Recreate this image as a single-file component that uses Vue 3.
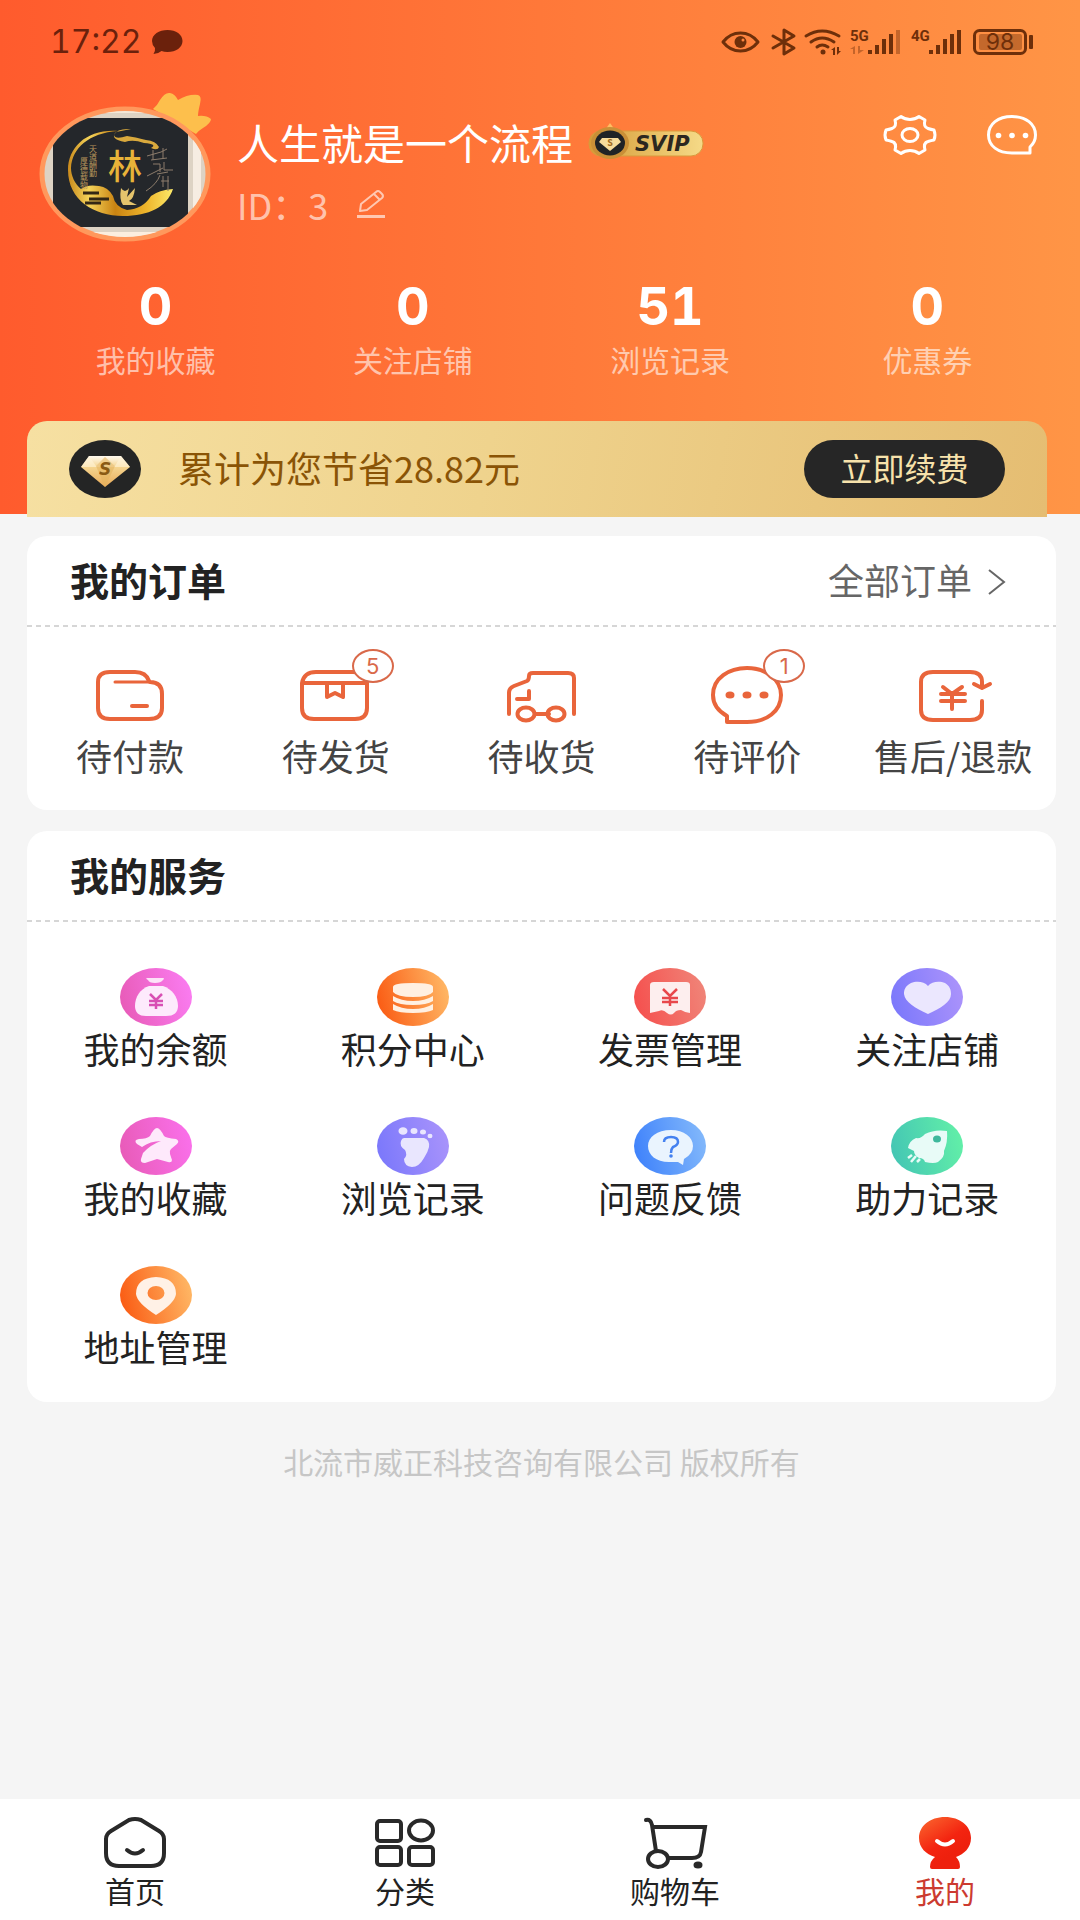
<script setup>
const stats = [
  { value: '0', label: '我的收藏' },
  { value: '0', label: '关注店铺' },
  { value: '51', label: '浏览记录' },
  { value: '0', label: '优惠券' },
]

const orders = [
  { icon: 'wallet', label: '待付款' },
  { icon: 'box', label: '待发货', badge: 5 },
  { icon: 'truck', label: '待收货' },
  { icon: 'comment', label: '待评价', badge: 1 },
  { icon: 'refund', label: '售后/退款' },
]

const services = [
  { icon: 'balance', label: '我的余额', from: '#e85bb8', to: '#fa7cf0' },
  { icon: 'points', label: '积分中心', from: '#fa5c14', to: '#ffb765' },
  { icon: 'invoice', label: '发票管理', from: '#f5504e', to: '#f08478' },
  { icon: 'heart', label: '关注店铺', from: '#7b78fb', to: '#ab93fb' },
  { icon: 'star', label: '我的收藏', from: '#e85bb8', to: '#fa70ea' },
  { icon: 'foot', label: '浏览记录', from: '#7b78fb', to: '#a893fb' },
  { icon: 'question', label: '问题反馈', from: '#3f82fb', to: '#82b8fb' },
  { icon: 'rocket', label: '助力记录', from: '#44c6b4', to: '#62efa8' },
  { icon: 'pin', label: '地址管理', from: '#fa5c14', to: '#ffb765' },
]

const tabs = [
  { icon: 'home', label: '首页' },
  { icon: 'grid', label: '分类' },
  { icon: 'cart', label: '购物车' },
  { icon: 'mine', label: '我的', active: true },
]
</script>

<template>
  <div class="page">
    <header class="header">
      <div class="status">
        <span class="clock">17:22</span>
        <svg class="status-chat" width="31" height="26" viewBox="0 0 31 26">
          <path d="M15.500 1C24 1 30.500 5.500 30.500 12S24 23 15.500 23Q12 23 9.500 22Q6 25 1.500 25Q3.500 22 3 19Q0 16 0 12C0 5.500 7 1 15.500 1Z" fill="#6b210c" />
        </svg>
        <svg class="status-icons" width="314" height="28" viewBox="0 0 314 28">
          <g fill="none" stroke="#6e2f0a" stroke-width="3" stroke-linejoin="round" stroke-linecap="round">
            <path d="M2 14Q9 5 19.500 5T37 14Q30 23 19.500 23T2 14Z" />
            <circle cx="19.500" cy="14" r="6" fill="#6e2f0a" stroke="none" />
            <circle cx="22" cy="12" r="1.500" fill="#ff8640" stroke="none" />
            <path d="M52 8L73 20L63 26V2L73 8L52 20" />
            <path d="M85 8Q101 -2 118 8" />
            <path d="M90 14Q101 6 113 14" />
            <path d="M96 19Q101 15 107 19" />
          </g>
          <g fill="#6e2f0a">
            <circle cx="102" cy="24" r="2.500" />
            <path d="M114 19V27H112V22H110ZM116 19V27L120 23H118V19Z" />
            <rect x="147" y="22" width="4" height="4" />
            <rect x="154" y="17" width="4" height="9" />
            <rect x="161" y="11" width="4" height="15" />
            <rect x="168" y="6" width="4" height="20" />
            <rect x="208" y="22" width="4" height="4" />
            <rect x="215" y="17" width="4" height="9" />
            <rect x="222" y="11" width="4" height="15" />
            <rect x="229" y="6" width="4" height="20" />
            <rect x="236" y="2" width="4" height="24" />
            <rect x="308" y="7" width="4" height="14" rx="1" />
            <g opacity=".4">
              <rect x="175" y="2" width="4" height="24" />
              <path d="M134 18V26H132V21H129ZM137 18V26L143 22H139V18Z" />
              <rect x="258" y="6" width="43" height="16" rx="2" />
            </g>
          </g>
          <rect x="253.500" y="2.500" width="51" height="23" rx="5" fill="none" stroke="#6e2f0a" stroke-width="3" />
          <g fill="#6e2f0a" font-family="Roboto, sans-serif">
            <text x="129" y="13" font-size="15" font-weight="700">5G</text>
            <text x="190" y="13" font-size="15" font-weight="700">4G</text>
            <text x="279" y="22" font-size="23" text-anchor="middle" font-family="Inter, sans-serif">98</text>
          </g>
        </svg>
      </div>

      <div class="profile">
        <svg class="avatar" width="172" height="150" viewBox="0 0 172 150">
          <defs>
            <clipPath id="avatar-clip"><ellipse cx="86" cy="82" rx="81" ry="63" /></clipPath>
            <linearGradient id="avatar-gold" x1="0" x2="1" y1="0" y2="0">
              <stop offset="0" stop-color="#c98a1c" />
              <stop offset=".2" stop-color="#f4d35a" />
              <stop offset=".45" stop-color="#c98312" />
              <stop offset=".75" stop-color="#efb62c" />
              <stop offset="1" stop-color="#fbe96a" />
            </linearGradient>
          </defs>
          <path d="M114 17Q118 14 121 8Q126 0 131 1Q136 2 139 8Q149 2 159 3Q163 4 161 12Q159 20 159 24Q167 23 172 27Q172 31 164 36Q159 39 157 42Z" fill="#fdbf4c" />
          <ellipse cx="86" cy="82" rx="83" ry="65" fill="#ddd3c4" stroke="#ff985c" stroke-width="5" />
          <g clip-path="url(#avatar-clip)">
            <rect x="0" y="14" width="172" height="7" fill="#f3e7d6" />
            <rect x="0" y="140" width="172" height="8" fill="#fbeede" />
            <rect x="154" y="20" width="8" height="122" fill="#f6ede2" />
            <rect x="14" y="26" width="135" height="109" fill="#24272b" />
            <path d="M79 39C48 37 29 55 29 78C29 108 55 124 84 124C110 124 128 115 134 97Q120 98 112 104Q104 117 88 118Q76 115 74 104Q69 95 60 94Q48 92 42 97C36 92 32 84 32 76C33 56 50 41 79 39Z" fill="url(#avatar-gold)" />
            <path d="M44 101H60M50 107H70M46 111H62" stroke="#332715" stroke-width="3" />
            <path d="M92 37Q78 36 75 43Q76 48 88 44Q96 45 107 48Q117 49 120 55Q119 59 112 56Q119 52 105 51Q94 47 86 50Q70 47 77 40Z" fill="#d9a93d" />
            <path d="M82 96Q86 102 90 96L88 105L96 96Q95 107 90 109L98 113H84Q80 108 82 96Z" fill="#e5c46c" />
            <text x="86" y="87" font-size="34" text-anchor="middle" fill="#e8b339" font-weight="500">林</text>
            <g fill="#b9975c" font-size="8" text-anchor="middle">
              <text x="54" y="60">天</text><text x="54" y="68">道</text><text x="54" y="76">酬</text><text x="54" y="84">勤</text>
              <text x="45" y="72">厚</text><text x="45" y="80">德</text><text x="45" y="88">载</text><text x="45" y="96">物</text>
            </g>
            <path d="M108 64L122 60L128 57M114 58V68M124 56V66M112 68L128 66M114 72H121V80M125 70V78H134M108 84L124 76M118 82L129 80M121 83Q118 92 107 99M124 84V95M129 84V99M122 89H130" fill="none" stroke="#8d7d6c" stroke-width="1" />
          </g>
        </svg>

        <div class="who">
          <div class="name-row">
            <span class="name">人生就是一个流程</span>
            <svg width="116" height="38" viewBox="0 0 116 38">
              <defs>
                <linearGradient id="svip-bg" x1="0" x2="1" y1="0" y2="0">
                  <stop offset="0" stop-color="#d69b36" /><stop offset="1" stop-color="#f5da88" />
                </linearGradient>
              </defs>
              <rect x="1" y="8" width="114" height="25" rx="12" fill="url(#svip-bg)" stroke="#d99a3c" />
              <path d="M22 0L27 7H17Z" fill="#ffbd63" />
              <ellipse cx="22" cy="20" rx="19" ry="16" fill="#c98f37" />
              <ellipse cx="22" cy="20" rx="15" ry="12.500" fill="#202326" />
              <path d="M14 15H30L33 19L22 28L11 19Z" fill="#f7dc9b" />
              <text x="22" y="23" font-size="9" font-weight="700" text-anchor="middle" fill="#a06a1d">S</text>
              <text x="47" y="28" font-size="21" font-weight="700" font-style="italic" font-family="DejaVu Sans, sans-serif" fill="#2b2720">SVIP</text>
            </svg>
          </div>
          <div class="id-row">
            <span>ID：3</span>
            <button type="button" class="icon-btn" aria-label="编辑">
              <svg width="30" height="28" viewBox="0 0 30 28" fill="none" stroke="currentColor" stroke-width="3" stroke-linejoin="round">
                <path d="M1 26.500H29" />
                <path d="M4 21L5 14L20 2Q22 0 24 2L26 4Q28 6 26 8L11 20ZM18 4L24 10" stroke-width="2" />
              </svg>
            </button>
          </div>
        </div>

        <div class="actions">
          <button type="button" class="icon-btn" aria-label="设置">
            <svg width="52" height="40" viewBox="0 0 52 40" fill="none" stroke="currentColor" stroke-width="3" stroke-linejoin="round">
              <path d="M17 1.500Q21 4.500 26 4.500T35 1.500L41 5Q39 12 44 13.500Q47 14.500 50 15Q52 20 50 25Q47 25.500 44 26.500Q39 28 41 35L35 38.500Q31 35.500 26 35.500T17 38.500L11 35Q13 28 8 26.500Q5 25.500 2 25Q0 20 2 15Q5 14.500 8 13.500Q13 12 11 5Z" />
              <ellipse cx="26" cy="20" rx="8" ry="6.500" />
            </svg>
          </button>
          <button type="button" class="icon-btn" aria-label="消息">
            <svg width="50" height="40" viewBox="0 0 50 40" fill="none" stroke="currentColor" stroke-width="3" stroke-linejoin="round">
              <path d="M43 38H25C11 38 1.500 31 1.500 20S11 1.500 25 1.500S48.500 9 48.500 20Q48.500 27 43 32Z" />
              <g fill="currentColor" stroke="none"><circle cx="11.500" cy="20.500" r="2.800" /><circle cx="25" cy="20.500" r="2.800" /><circle cx="38.500" cy="20.500" r="2.800" /></g>
            </svg>
          </button>
        </div>
      </div>

      <ul class="stats">
        <li v-for="s in stats" :key="s.label">
          <strong>{{ s.value }}</strong>
          <span>{{ s.label }}</span>
        </li>
      </ul>

      <div class="vip">
        <svg width="72" height="58" viewBox="0 0 72 58">
          <defs>
            <linearGradient id="vip-gem" x1="0" x2="0" y1="0" y2="1">
              <stop offset="0" stop-color="#fffaf0" /><stop offset=".35" stop-color="#f5d590" /><stop offset="1" stop-color="#e9ab58" />
            </linearGradient>
          </defs>
          <ellipse cx="36" cy="29" rx="36" ry="29" fill="#242525" />
          <path d="M20 16H52L61 27L36 47L12 27Z" fill="url(#vip-gem)" />
          <path d="M20 16L27 26L36 17L46 26L52 16L61 27H12Z" fill="#fff3d6" opacity=".65" />
          <path d="M27 26L36 17L46 26L36 47Z" fill="#e5b45f" opacity=".6" />
          <text x="36" y="35" font-size="17" font-weight="700" font-style="italic" font-family="DejaVu Sans, sans-serif" text-anchor="middle" fill="#8a5a14">S</text>
        </svg>
        <span class="vip-text">累计为您节省28.82元</span>
        <button type="button" class="renew">立即续费</button>
      </div>
    </header>

    <main class="main">
      <section class="card">
        <div class="card-head">
          <h2>我的订单</h2>
          <a href="#" class="more">
            <span>全部订单</span>
            <svg width="18" height="28" viewBox="0 0 18 28" fill="none" stroke="currentColor" stroke-width="2">
              <path d="M1 3L16 15L1 27" />
            </svg>
          </a>
        </div>
        <div class="orders">
          <a v-for="o in orders" :key="o.label" href="#" class="order">
            <span class="order-icon">
              <svg width="72" height="60" viewBox="0 0 72 60" fill="none" stroke="#e9653b" stroke-width="4" stroke-linejoin="round" stroke-linecap="round">
                <template v-if="o.icon === 'wallet'">
                  <path d="M55 16Q52 7 41 7H16Q4 7 4 17V43Q4 54 16 54H55Q68 54 68 43V29Q68 17 56 17" />
                  <path d="M21 17H56" stroke-width="3" />
                  <path d="M38 41H53" />
                </template>
                <template v-else-if="o.icon === 'box'">
                  <path d="M2 18V43Q2 54 14 54H55Q67 54 67 43V18Q65 7 53 7H16Q4 7 2 18H67" />
                  <path d="M27 18V32L35 28L43 32V18" stroke-linecap="butt" />
                </template>
                <template v-else-if="o.icon === 'truck'">
                  <path d="M4 49V28Q4 23 9 21L22 16Q24 15 24 11Q24 8 28 8H63Q69 8 69 13V49" />
                  <path d="M12 34H24V26M31 49H44" />
                  <ellipse cx="21" cy="49" rx="8.500" ry="6.500" /><ellipse cx="51" cy="49" rx="8.500" ry="6.500" />
                </template>
                <template v-else-if="o.icon === 'comment'">
                  <path d="M16 57V51C7 46 2 39 2 30C2 13 18 3 36 3S70 14 70 30S56 57 36 57Z" />
                  <g fill="#e9653b" stroke="none"><ellipse cx="19" cy="30" rx="4.500" ry="3.500" /><ellipse cx="36" cy="30" rx="4.500" ry="3.500" /><ellipse cx="53" cy="30" rx="4.500" ry="3.500" /></g>
                </template>
                <template v-else>
                  <path d="M65 22V17Q65 7 53 7H16Q4 7 4 17V45Q4 55 16 55H53Q65 55 65 45V36" />
                  <path d="M57 19L65 23L73 19M26 22L35 29L45 22M24 29H48M24 36H48M35 29V44" />
                </template>
              </svg>
              <span v-if="o.badge" class="badge">{{ o.badge }}</span>
            </span>
            <span class="order-label">{{ o.label }}</span>
          </a>
        </div>
      </section>

      <section class="card">
        <div class="card-head">
          <h2>我的服务</h2>
        </div>
        <div class="services">
          <a v-for="s in services" :key="s.icon" href="#" class="service">
            <svg width="72" height="58" viewBox="0 0 72 58">
              <defs>
                <linearGradient :id="'bg-' + s.icon" x1="0" x2="1" y1=".6" y2=".4">
                  <stop offset="0" :stop-color="s.from" /><stop offset="1" :stop-color="s.to" />
                </linearGradient>
              </defs>
              <ellipse cx="36" cy="29" rx="36" ry="29" :fill="`url(#bg-${s.icon})`" />
              <template v-if="s.icon === 'balance'">
                <path d="M27 10H43Q45 10 43 12Q41 15 35 15T28 12Q25 10 27 10Z" fill="#fde3f8" />
                <path d="M29 18H43C52 21 58 29 58 38Q58 48 46 48H26Q15 48 15 38C15 29 20 21 29 18Z" fill="#fdeafc" />
                <path d="M30 26L36 32L42 26M29 33H43M29 37H43M36 32V41" fill="none" stroke="#d850b4" stroke-width="2.500" />
              </template>
              <template v-else-if="s.icon === 'points'">
                <path d="M16 19Q16 15 36 15T56 19V24Q52 29 36 29T16 24Z" fill="#fff0e2" />
                <path d="M16 28Q24 33 36 33T56 28V33Q50 37 36 37T16 33ZM16 36Q24 41 36 41T56 36V42Q50 45 36 45T16 42Z" fill="#fff0e2" />
              </template>
              <template v-else-if="s.icon === 'invoice'">
                <path d="M20 14H52Q56 14 56 17V45Q52 45 47 42Q42 42 40 45Q37 48 33 45Q29 41 25 43L16 45V17Q16 14 20 14Z" fill="#fdeeee" />
                <path d="M29 21L36 28L43 21M28 30H44M28 34H44M36 28V38" fill="none" stroke="#e8474b" stroke-width="2.500" />
              </template>
              <path v-else-if="s.icon === 'heart'" d="M37 18C33 13 25 13 20 15C14 18 13 22 13 26C14 34 24 40 37 46C50 40 60 34 60 26C60 22 59 18 54 15C49 13 41 13 37 18Z" fill="#ebe7fe" />
              <path v-else-if="s.icon === 'star'" d="M37 11Q40 11 44 19Q46 21 56 22Q60 24 57 27L51 32Q49 34 50 37L52 43Q52 46 48 45L37 42L25 46Q20 46 21 42L23 36Q30 28 41 24Q30 24 22 30L17 27Q13 23 19 22Q27 22 30 19Q34 11 37 11Z" fill="#fee9fb" />
              <g v-else-if="s.icon === 'foot'" fill="#e9e6fe">
                <ellipse cx="26" cy="14" rx="4.500" ry="3.800" /><ellipse cx="37" cy="14" rx="3.500" ry="3" /><ellipse cx="46" cy="15" rx="3" ry="2.500" /><ellipse cx="53" cy="19" rx="2.500" ry="2.300" />
                <path d="M27 21H47Q53 23 52 30Q51 35 47 41Q42 50 35 50Q27 49 27 42Q31 38 28 33Q22 29 24 24Q25 21 27 21Z" />
              </g>
              <template v-else-if="s.icon === 'question'">
                <path d="M37 13C50 13 59 20 59 29Q59 37 50 42L49 48L44 45H35C22 45 14 38 14 29S23 13 37 13Z" fill="#eaf4fe" />
                <path d="M30 25Q30 20 37 20T44 25Q44 28 39 30Q37 32 37 36" fill="none" stroke="#4481f0" stroke-width="2.500" />
                <circle cx="37" cy="39" r="1.800" fill="#4481f0" />
              </template>
              <template v-else-if="s.icon === 'rocket'">
                <path d="M34 17Q44 12 56 14Q57 25 53 34Q54 40 47 45Q43 47 34 45Q33 41 28 41Q23 38 23 34L17 31Q18 24 25 21Q30 22 34 17Z" fill="#e8fbf7" />
                <ellipse cx="46" cy="22" rx="4" ry="3.500" fill="#3eb89c" />
                <path d="M21 38L17 41M25 39L20 45M29 42L26 45" stroke="#e8fbf7" stroke-width="2.500" />
              </template>
              <path v-else fill-rule="evenodd" d="M36 11Q56 12 56 28Q55 37 36 49Q17 37 16 28Q16 12 36 11ZM36 20A8.500 7 0 1 0 36 34A8.500 7 0 1 0 36 20Z" fill="#fff1e6" />
            </svg>
            <span>{{ s.label }}</span>
          </a>
        </div>
      </section>

      <p class="copyright">北流市威正科技咨询有限公司 版权所有</p>
    </main>

    <nav class="tabs">
      <a v-for="t in tabs" :key="t.icon" href="#" class="tab" :class="{ active: t.active }">
        <svg width="64" height="54" viewBox="0 0 64 54" fill="none" stroke="#292929" stroke-width="4" stroke-linecap="round" stroke-linejoin="round">
          <template v-if="t.icon === 'home'">
            <path d="M26 4Q32 2 38 4L56 15Q61 18 61 23V37Q61 50 48 50H16Q3 50 3 37V23Q3 18 8 15Z" />
            <path d="M24 34Q32 41 40 34" />
          </template>
          <template v-else-if="t.icon === 'grid'">
            <rect x="4" y="5" width="24" height="20" rx="3" /><ellipse cx="48" cy="14.500" rx="12" ry="10" />
            <rect x="4" y="31" width="24" height="18" rx="3" /><rect x="36" y="31" width="24" height="18" rx="3" />
          </template>
          <template v-else-if="t.icon === 'cart'">
            <path d="M3 4Q8 3 9 9L13 35M10 11H62L58 36Q57 42 49 42H26" stroke-linejoin="miter" />
            <ellipse cx="15" cy="43" rx="10" ry="8" /><ellipse cx="55" cy="49" rx="4.500" ry="3.500" fill="#292929" stroke="none" />
          </template>
          <template v-else>
            <defs>
              <linearGradient id="mine-bg" x1="0" x2=".5" y1="0" y2=".8">
                <stop offset="0" stop-color="#fb6a30" /><stop offset=".7" stop-color="#f32410" /><stop offset="1" stop-color="#ee200d" />
              </linearGradient>
            </defs>
            <path d="M32 1C47 1 58 10 58 22C58 32 51 38 43 41Q47 45 47 51Q47 53 45 53H19Q17 53 17 51Q17 45 22 41C13 38 6 32 6 22C6 10 17 1 32 1Z" fill="url(#mine-bg)" stroke="none" />
            <path d="M24 25Q32 32 40 25" stroke="#fff" />
          </template>
        </svg>
        <span>{{ t.label }}</span>
      </a>
    </nav>
  </div>
</template>

<style>
body {
  margin: 0;
  background: #f5f5f5;
}
</style>

<style scoped>
.page {
  min-height: 100vh;
  display: flex;
  flex-direction: column;
  background: #f5f5f5;
  color: #222;
  font-family: "Noto Sans CJK SC", sans-serif;
  font-size: 36px;
}
.page svg {
  display: block;
  flex: none;
  overflow: visible;
}
a {
  color: inherit;
  text-decoration: none;
}
button {
  font: inherit;
  border: 0;
  padding: 0;
  cursor: pointer;
}
.icon-btn {
  background: none;
  color: inherit;
}
.header {
  background: linear-gradient(90deg, #ff5b2d, #ff7839 50%, #ff9546);
  color: #fff;
}
.status {
  display: flex;
  align-items: center;
  height: 28px;
  padding: 28px 45px 0 50px;
}
.clock {
  font-family: Inter, sans-serif;
  font-size: 32px;
  font-variant-numeric: tabular-nums;
  line-height: 28px;
  color: #6b210c;
}
.status-chat {
  margin-left: 10px;
}
.status-icons {
  margin-left: auto;
}
.profile {
  display: flex;
  align-items: flex-start;
  padding: 36px 43px 0 39px;
}
.who {
  flex: 1;
  padding: 22px 0 0 26px;
}
.name-row {
  display: flex;
  align-items: center;
  gap: 15px;
  line-height: 56px;
}
.name {
  font-size: 42px;
}
.id-row {
  display: flex;
  align-items: center;
  gap: 28px;
  margin-top: 10px;
  line-height: 48px;
  color: rgba(255, 255, 255, 0.62);
}
.actions {
  display: flex;
  gap: 51px;
  padding-top: 23px;
}
.stats {
  list-style: none;
  margin: 35px 24px 0 27px;
  padding: 0;
  display: flex;
}
.stats li {
  flex: 1;
  display: flex;
  flex-direction: column;
  align-items: center;
  gap: 4px;
}
.stats strong {
  font-family: Inter, sans-serif;
  font-size: 52px;
  font-weight: 700;
  font-variant-numeric: tabular-nums;
  line-height: 60px;
}
.stats span {
  font-size: 30px;
  line-height: 36px;
  color: rgba(255, 255, 255, 0.6);
}
.vip {
  display: flex;
  align-items: center;
  height: 96px;
  box-sizing: border-box;
  margin: 44px 33px -3px 27px;
  padding: 0 42px;
  border-radius: 20px 20px 0 0;
  background: linear-gradient(100deg, #f6e0a2, #efd38d 45%, #e5bd72);
}
.vip-text {
  flex: 1;
  margin-left: 37px;
  padding-bottom: 4px;
  color: #8a5406;
}
.renew {
  width: 201px;
  height: 58px;
  padding-bottom: 4px;
  border-radius: 29px;
  background: #262626;
  color: #f7e2ab;
  font-size: 32px;
  line-height: 54px;
}
.main {
  display: flex;
  flex-direction: column;
  gap: 21px;
  padding: 22px 24px 0 27px;
}
.card {
  background: #fff;
  border-radius: 20px;
}
.card-head {
  display: flex;
  align-items: center;
  justify-content: space-between;
  height: 91px;
  box-sizing: border-box;
  padding: 0 50px 2px 43px;
  background: repeating-linear-gradient(90deg, #d6d6d6 0 5px, transparent 5px 9px) 0 100% / 100% 2px no-repeat;
}
.card-head h2 {
  margin: 0;
  padding-bottom: 4px;
  font-size: 39px;
  font-weight: 700;
  line-height: 48px;
}
.more {
  display: flex;
  align-items: center;
  gap: 16px;
  line-height: 48px;
  color: #666;
}
.more span {
  padding-bottom: 4px;
}
.orders {
  display: flex;
  padding: 38px 0 33px;
}
.order {
  flex: 1 1 0;
  display: flex;
  flex-direction: column;
  align-items: center;
  gap: 8px;
  color: #444;
}
.order-icon {
  position: relative;
}
.badge {
  position: absolute;
  top: -16px;
  left: 52px;
  width: 42px;
  height: 34px;
  box-sizing: border-box;
  border: 2px solid #d9694a;
  border-radius: 50%;
  background: #fff;
  color: #d9694a;
  font-family: Inter, sans-serif;
  font-size: 22px;
  line-height: 30px;
  text-align: center;
}
.order-label {
  line-height: 44px;
  white-space: nowrap;
}
.services {
  display: grid;
  grid-template-columns: repeat(4, 1fr);
  row-gap: 48px;
  padding: 46px 0 35px;
}
.service {
  display: flex;
  flex-direction: column;
  align-items: center;
  gap: 1px;
  line-height: 42px;
}
.copyright {
  margin: 20px 0 40px;
  text-align: center;
  font-size: 30px;
  line-height: 36px;
  color: #c6c6c6;
}
.tabs {
  display: flex;
  margin-top: auto;
  padding: 17px 0 12px;
  background: #fff;
}
.tab {
  flex: 1;
  display: flex;
  flex-direction: column;
  align-items: center;
  gap: 2px;
  font-size: 30px;
  line-height: 36px;
}
.tab.active {
  color: #cc3b30;
}
</style>
